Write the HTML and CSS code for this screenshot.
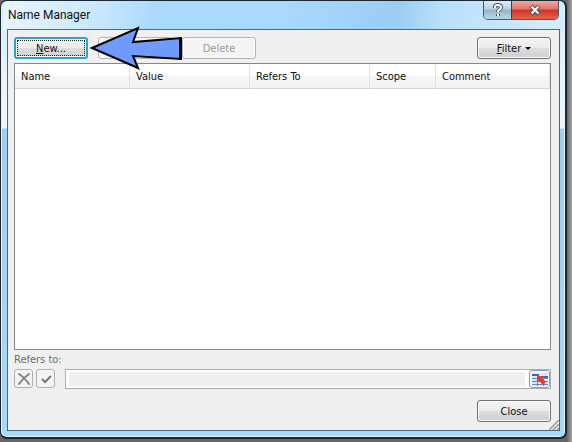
FILE: index.html
```html
<!DOCTYPE html>
<html lang="en">

<head>
  <meta charset="UTF-8">
  <meta name="viewport" content="width=device-width, initial-scale=1.0">
  <title>Name Manager</title>
  <link rel="stylesheet" href="styles.css">
</head>

<body>
  <div class="dialog">
    <div class="titlebar">
      <h1>Name Manager</h1>
      <div class="window-buttons">
        <button type="button" class="help" aria-label="Help">
          <svg width="12" height="14" viewBox="0 0 12 14">
            <path class="outline" d="M3 5V4Q3 2 6 2T9 4.500Q9 6 7 7Q6 7.500 6 9M6 11v2" />
            <path class="glyph" d="M3 5V4Q3 2 6 2T9 4.500Q9 6 7 7Q6 7.500 6 9M6 11v2" />
          </svg>
        </button>
        <button type="button" class="exit" aria-label="Close window">
          <svg width="14" height="12" viewBox="0 0 14 12">
            <path class="outline" d="M3 2l8 8M11 2l-8 8" />
            <path class="glyph" d="M3.500 2.500l7 7M10.500 2.500l-7 7" />
          </svg>
        </button>
      </div>
    </div>

    <div class="content">
      <div class="toolbar">
        <button type="button" class="btn focused"><span><u>N</u>ew...</span></button>
        <button type="button" class="btn" disabled aria-label="Edit"></button>
        <button type="button" class="btn" disabled>Delete</button>
        <button type="button" class="btn filter"><span><u>F</u>ilter</span><i class="caret"></i></button>
        <svg class="arrow" width="94" height="46" viewBox="0 0 94 46">
          <path d="M2 23L48 3L43 17L91 13V34L43 31L48 43Z" fill="#6f9bff" stroke="#000" stroke-width="2" />
          <path d="M90.500 13V34" stroke="#000" stroke-width="3" />
        </svg>
      </div>

      <div class="list">
        <table>
          <thead>
            <tr>
              <th class="name">Name</th>
              <th class="value">Value</th>
              <th class="refers">Refers To</th>
              <th class="scope">Scope</th>
              <th>Comment</th>
            </tr>
          </thead>
        </table>
      </div>

      <label class="refers-label" for="refersTo">Refers to:</label>
      <div class="refers-row">
        <button type="button" class="small" disabled aria-label="Cancel">
          <svg width="14" height="14" viewBox="0 0 14 14">
            <path d="M2 2Q7 5 12 12M12 2Q6 6 2 12" fill="none" stroke="#858585" stroke-width="2" stroke-linecap="round" />
          </svg>
        </button>
        <button type="button" class="small" disabled aria-label="Accept">
          <svg width="14" height="14" viewBox="0 0 14 14">
            <path d="M3 7l3 3l6-6" fill="none" stroke="#777" stroke-width="2" />
          </svg>
        </button>
        <div class="field">
          <input type="text" id="refersTo" disabled>
          <button type="button" class="picker" aria-label="Select range">
            <svg width="16" height="13" viewBox="0 0 16 13">
              <path d="M0 0h16v13h-16z" fill="#dce9fa" />
              <path d="M0 2h6v2h10" fill="none" stroke="#3e68b0" stroke-width="2" />
              <path d="M0 5.500h16M0 8.500h16M0 11.500h16M5.500 4v9M11.500 4v9" stroke="#5f88c8" fill="none" />
              <path d="M5 3h6l-1 2l4 4l-3 3l-4-4l-2 1z" fill="#e63a2b" />
            </svg>
          </button>
        </div>
      </div>

      <div class="footer">
        <button type="button" class="btn">Close</button>
      </div>
      <svg class="grip" width="10" height="10" viewBox="0 0 10 10">
        <path d="M0 10L10 0M4 10L10 4M8 10L10 8" stroke="#9a9a9a" stroke-width="1.500" />
      </svg>
    </div>
  </div>
</body>

</html>
```

FILE: styles.css
```css
* {
  box-sizing: border-box;
}

body {
  margin: 0;
  height: 100vh;
  padding: 0 5px 3px 0;
  background: linear-gradient(to right, #666 calc(100% - 5px), #a5a5a5);
  font-family: "DejaVu Sans Condensed", "Noto Sans", sans-serif;
  font-size: 11px;
  color: #111;
}

button,
input {
  font: inherit;
  color: inherit;
  padding: 0;
  margin: 0;
}

.dialog {
  display: flex;
  flex-direction: column;
  height: 100%;
  padding: 0 5px 6px 6px;
  border: 2px solid #1c2732;
  border-top-width: 1px;
  border-left-width: 1px;
  border-radius: 7px;
  background: linear-gradient(to bottom, #c9e8fc 0, #d9effc 28px, #e8f5fe 80px, #eef6fd 127px, #9dcdf2 128px, #a9d8f8 100%);
  box-shadow: inset 0 0 0 1px #e2f5ff;
}

.titlebar {
  display: flex;
  justify-content: space-between;
  align-items: center;
  height: 28px;
  margin: 0 -4px;
  padding: 0 5px 0 5px;
  border-radius: 6px 6px 0 0;
  background: linear-gradient(100deg, #e9f6fe 0, #c9e8fd 17%, #abdaff 27%, #a9d9fe 50%, #9bcdf2 70%, #b9e0fb 78%, #d5edfd 100%);
}

.titlebar h1 {
  margin: 0;
  font-family: Roboto, sans-serif;
  font-size: 12px;
  font-weight: normal;
}

.window-buttons {
  display: flex;
  align-self: flex-start;
  height: 19px;
  border: 1px solid #48586a;
  border-top: 0;
  border-radius: 0 0 5px 5px;
  overflow: hidden;
}

.window-buttons button {
  display: flex;
  align-items: center;
  justify-content: center;
  border: 0;
}

.help {
  width: 27px;
  background: linear-gradient(#dcecf8, #b9d0e1 45%, #92b3cb 50%, #bcd9eb);
}

.window-buttons .exit {
  width: 47px;
  border-left: 1px solid #6d2a26;
  background: linear-gradient(#f3aaa0, #e27267 45%, #cb3526 50%, #e9614a);
}

.outline {
  fill: none;
  stroke: #4b5360;
  stroke-width: 4;
}

.glyph {
  fill: none;
  stroke: #fff;
  stroke-width: 2;
}

.content {
  position: relative;
  flex: 1;
  display: flex;
  flex-direction: column;
  padding: 7px 8px 8px 6px;
  border: 1px solid #4d687c;
  background: #f0f0f0;
}

.toolbar {
  position: relative;
  display: flex;
  gap: 10px;
  margin-bottom: 4px;
}

.btn {
  display: flex;
  align-items: center;
  justify-content: center;
  width: 74px;
  height: 22px;
  border: 1px solid #707070;
  border-radius: 3px;
  background: linear-gradient(#f3f3f3, #ebebeb 49%, #dddddd 50%, #cfcfcf);
  box-shadow: inset 0 0 0 1px #fcfcfc;
}

.btn:disabled {
  border-color: #adb2b5;
  background: #f4f4f4;
  color: #9a9a9a;
}

.focused {
  border: 2px solid #2aa5c8;
  outline: 1px dotted #222;
  outline-offset: -4px;
}

.filter {
  gap: 4px;
  margin-left: auto;
}

.caret {
  border: 3px solid transparent;
  border-top-color: #000;
  border-bottom: 0;
}

/* pointer drawn over the buttons */
.arrow {
  position: absolute;
  left: 76px;
  top: -12px;
}

.list {
  flex: 1;
  border: 1px solid #828790;
  background: #fff;
}

table {
  width: 100%;
  border-collapse: separate;
  border-spacing: 0;
  table-layout: fixed;
}

th {
  height: 25px;
  padding: 1px 6px 0;
  border-right: 1px solid #dfe3e8;
  border-bottom: 1px solid #d5d5d5;
  background: linear-gradient(#fff 50%, #f5f6f8 52%, #f1f2f4);
  font-weight: normal;
  text-align: left;
}

.name {
  width: 115px;
}

.value,
.refers {
  width: 120px;
}

.scope {
  width: 66px;
}

.refers-label {
  align-self: flex-start;
  line-height: 19px;
  color: #6d6d6d;
}

.refers-row {
  display: flex;
  gap: 3px;
}

.small {
  display: flex;
  align-items: center;
  justify-content: center;
  width: 19px;
  height: 19px;
  border: 1px solid #adb2b5;
  border-radius: 3px;
  background: #f4f4f4;
}

.field {
  display: flex;
  flex: 1;
  align-items: center;
  gap: 4px;
  height: 20px;
  margin-left: 7px;
  padding-left: 3px;
  border: 1px solid #abadb3;
  background: #fff;
}

.field input {
  flex: 1;
  min-width: 0;
  height: 14px;
  border: 0;
  background: #f0f0f0;
}

.picker {
  display: flex;
  align-items: center;
  justify-content: center;
  width: 21px;
  height: 18px;
  border: 1px solid #8e9db0;
  border-radius: 3px;
  background: #f3f7fc;
}

.footer {
  display: flex;
  justify-content: flex-end;
  margin-top: 11px;
}

.grip {
  position: absolute;
  right: 0;
  bottom: 0;
}
```
